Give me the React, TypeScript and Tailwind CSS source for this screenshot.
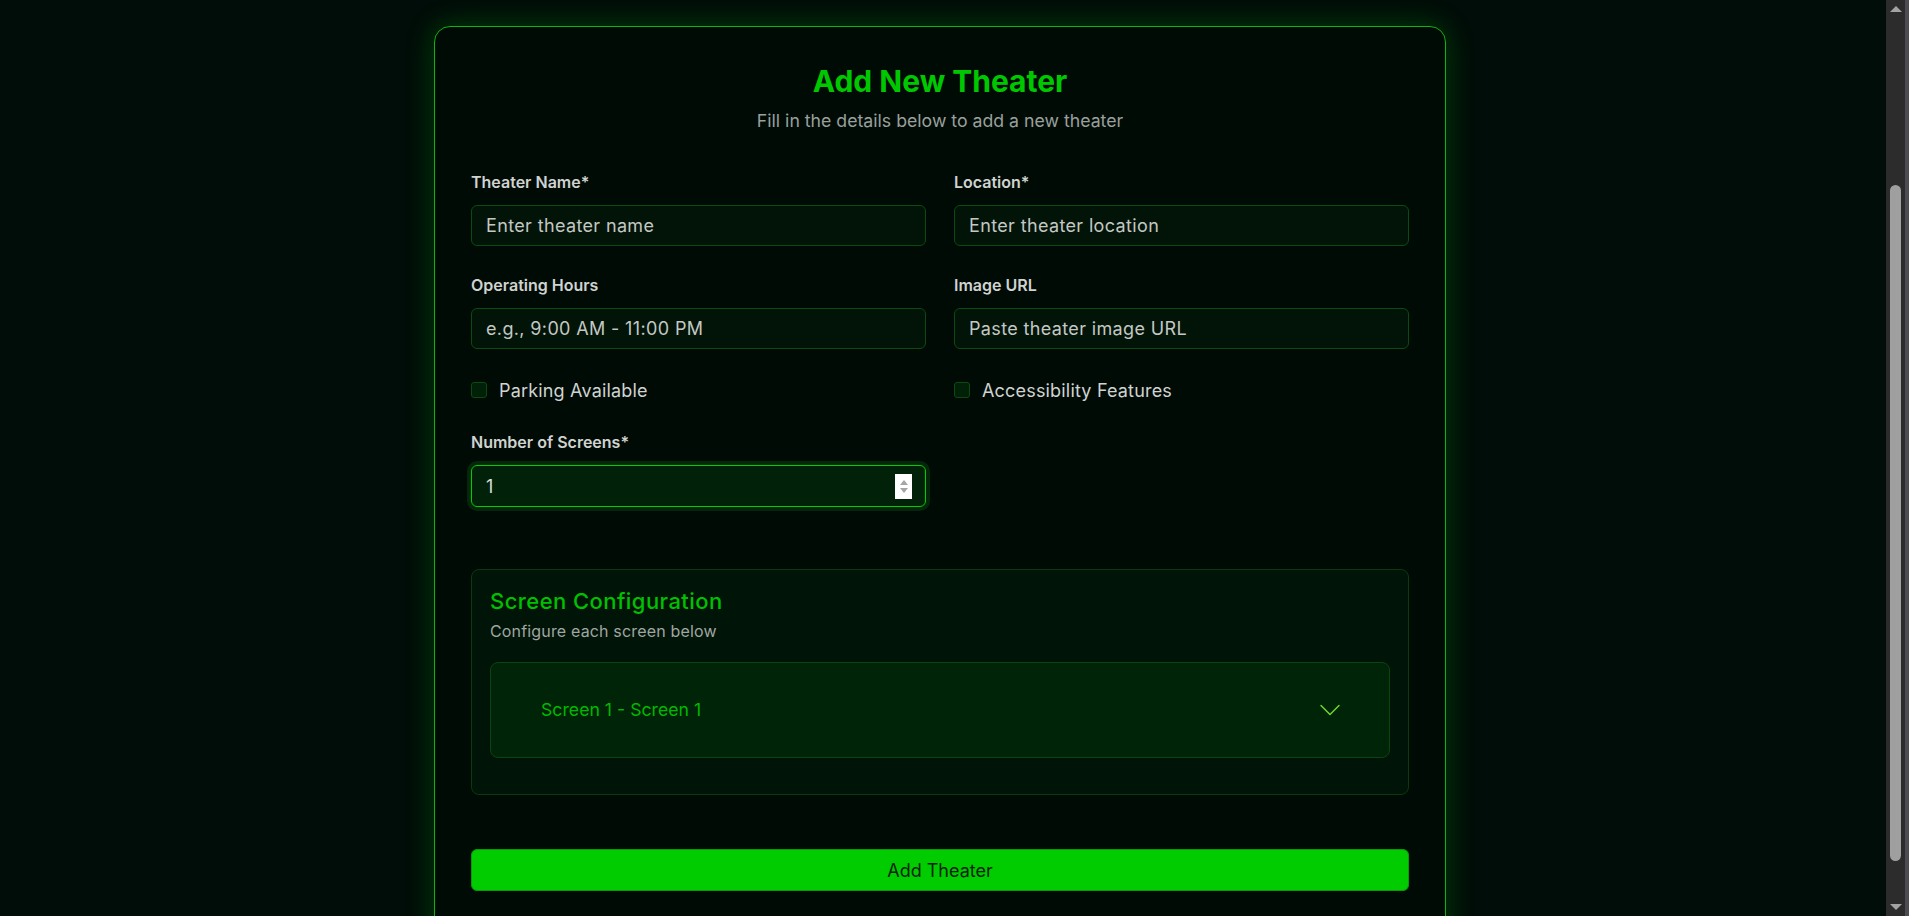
import React from "react";
import { ChevronDown } from "lucide-react";

const font = { fontFamily: "Inter, 'Noto Sans', sans-serif" };

const Field = ({ label, placeholder }: { label: string; placeholder: string }) => {
  return (
    <div className="flex flex-col">
      <label className="text-[16px] leading-[22px] font-semibold text-[#d0d3d0] mb-3">{label}</label>
      <input
        placeholder={placeholder}
        className="h-[41px] w-full rounded-md border border-[#0b4a12] bg-[#011407] px-[14px] text-[18px] tracking-[0.02em] text-[#d0d3d0] placeholder:text-[#c4c8c4] outline-none"
      />
    </div>
  );
};

const Check = ({ label }: { label: string }) => {
  return (
    <label className="flex h-[26px] items-center gap-3 text-[18px] tracking-[0.01em] text-[#d0d3d0]">
      <span className="h-4 w-4 rounded-[3px] border border-[#0b4a12] bg-[#012008]" />
      {label}
    </label>
  );
};

const App = () => {
  return (
    <div className="flex h-screen w-full overflow-hidden bg-[#000d08]" style={font}>
      <div className="flex flex-1 justify-center pr-[6px] pt-[26px]">
        <div className="h-[960px] w-[1012px] shrink-0 rounded-2xl border border-[#12b012] bg-[#000b06] p-9 shadow-[0_0_28px_rgba(0,200,0,0.28)]">
          <div className="mb-[38px] text-center">
            <h1 className="text-[30px] leading-9 font-bold text-[#00c800]">Add New Theater</h1>
            <p className="mt-[10px] text-[17.7px] leading-6 text-[#9aa09c]">Fill in the details below to add a new theater</p>
          </div>

          <div className="grid grid-cols-2 gap-x-7 gap-y-7">
            <Field label="Theater Name*" placeholder="Enter theater name" />
            <Field label="Location*" placeholder="Enter theater location" />
            <Field label="Operating Hours" placeholder="e.g., 9:00 AM - 11:00 PM" />
            <Field label="Image URL" placeholder="Paste theater image URL" />
            <Check label="Parking Available" />
            <Check label="Accessibility Features" />
            <div className="flex flex-col">
              <label className="text-[16px] leading-[22px] font-semibold text-[#d0d3d0] mb-3">Number of Screens*</label>
              <div className="flex h-[42px] items-center justify-between rounded-md border border-[#00cc00] bg-[#012208] pl-[14px] pr-[13px] text-[18px] text-[#d8dcd8] ring-4 ring-[#04260a]">
                <span>1</span>
                <span className="flex h-[25px] w-[17px] flex-col items-center justify-center gap-[3px] bg-white">
                  <span className="h-0 w-0 border-x-[4px] border-b-[5px] border-x-transparent border-b-[#a6a6a6]" />
                  <span className="h-0 w-0 border-x-[4px] border-t-[5px] border-x-transparent border-t-[#a6a6a6]" />
                </span>
              </div>
            </div>
          </div>

          <div className="mt-[62px] rounded-lg border border-[#0a3a10] bg-[#001407] px-[18px] pt-[17px] pb-[36px]">
            <h2 className="text-[22px] leading-7 font-medium tracking-[0.02em] text-[#00c000]">Screen Configuration</h2>
            <p className="mt-[6px] text-[16px] leading-5 tracking-[0.01em] text-[#a0a6a2]">Configure each screen below</p>
            <div className="mt-[21px] flex h-[96px] items-center justify-between rounded-lg border border-[#0b4412] bg-[#002408] pl-[50px] pr-[41px]">
              <span className="text-[17.7px] text-[#00b800]">Screen 1 - Screen 1</span>
              <ChevronDown size={36} strokeWidth={1} className="text-[#6fd62a]" />
            </div>
          </div>

          <button className="mt-[54px] h-[42px] w-full rounded-md border border-[#0a9a0a] bg-[#00cc00] text-[18px] text-[#0a1f0a]">
            Add Theater
          </button>
        </div>
      </div>

      <div className="flex h-full w-[23px] shrink-0">
        <div className="flex h-full w-[19px] flex-col items-center bg-[#2c2c2c]">
          <span className="mt-[6px] h-0 w-0 border-x-[6px] border-b-[6px] border-x-transparent border-b-[#a3a3a3]" />
          <div className="mt-[173px] h-[676px] w-[11px] rounded-full bg-[#9f9f9f]" />
          <span className="mt-auto mb-[6px] h-0 w-0 border-x-[6px] border-t-[6px] border-x-transparent border-t-[#a3a3a3]" />
        </div>
        <div className="h-full flex-1 bg-[#4c4c52]" />
      </div>
    </div>
  );
};

export default App;
